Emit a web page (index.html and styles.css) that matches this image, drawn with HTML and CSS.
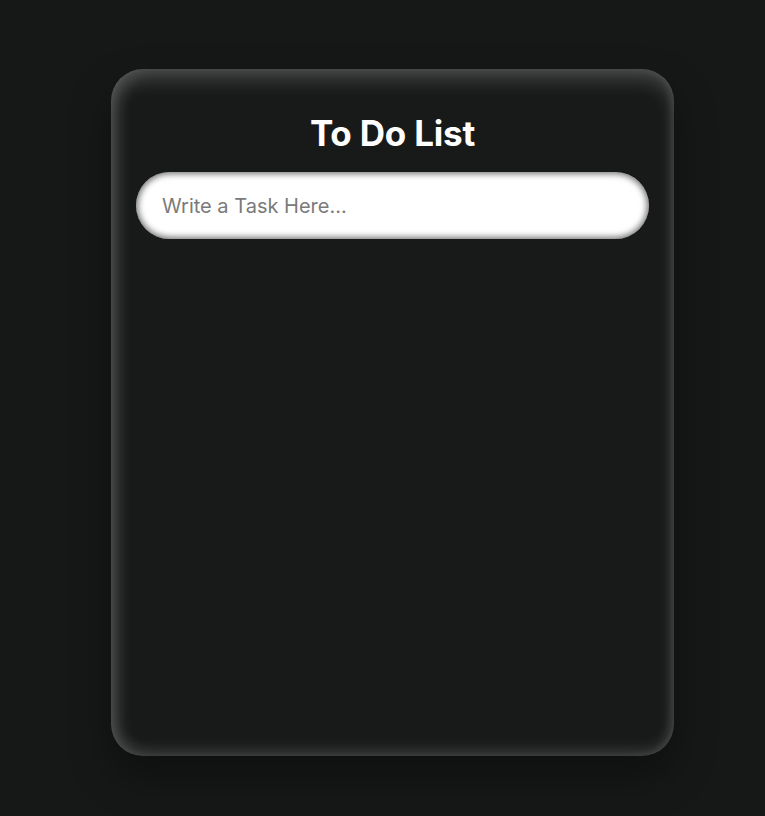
FILE: index.html
```html
<!DOCTYPE html>
<html lang="en">
<head>
<meta charset="utf-8">
<title>To Do List</title>
<link rel="stylesheet" href="styles.css">
</head>
<body>
  <main class="card">
    <h1 class="title">To Do List</h1>
    <input class="task-input" type="text" placeholder="Write a Task Here...">
    <ul class="task-list"></ul>
  </main>
</body>
</html>
```
FILE: styles.css
```css
* { box-sizing: border-box; }
html, body { height: 100%; }
body {
  margin: 0;
  background: #161717;
  font-family: "Inter", "Open Sans", sans-serif;
  padding: 69px 0 0 111px;
}
.card {
  width: 563px;
  height: 687px;
  background: #181a19;
  border-radius: 32px;
  padding: 40px 25px 20px;
  display: flex;
  flex-direction: column;
  align-items: stretch;
  box-shadow:
    inset 0 12px 18px rgba(255,255,255,0.16),
    inset 9px 0 15px rgba(255,255,255,0.11),
    inset 0 -8px 14px rgba(255,255,255,0.09),
    inset -4px 0 10px rgba(255,255,255,0.05),
    0 20px 40px rgba(0,0,0,0.35);
}
.title {
  margin: 0;
  text-align: center;
  color: #ffffff;
  font-size: 35px;
  font-weight: 700;
  line-height: 48px;
  letter-spacing: -0.2px;
}
.task-input {
  margin-top: 15px;
  height: 67px;
  width: 100%;
  border: none;
  outline: none;
  border-radius: 34px;
  background: #ffffff;
  padding: 0 26px;
  font-family: inherit;
  font-size: 20px;
  color: #333;
  box-shadow: inset 0 0 6px 2px rgba(0,0,0,0.55);
}
.task-input::placeholder { color: #7a7a7a; }
.task-list { margin: 0; padding: 0; list-style: none; }
```
